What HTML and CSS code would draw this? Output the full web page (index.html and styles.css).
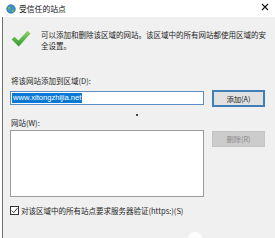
FILE: index.html
```html
<!DOCTYPE html>
<html lang="zh-CN">
<head>
<meta charset="utf-8">
<link rel="stylesheet" href="styles.css">
</head>
<body>
<div class="window">
  <div class="titlebar">
    <svg class="ticon" width="10" height="10" viewBox="0 0 10 10">
      <circle cx="5" cy="5" r="4.3" fill="#3d8fd1"/>
      <path d="M2 3 Q4 2 5 4 Q4 6 2.5 6 Z" fill="#6cbf4a"/>
      <path d="M6 6 Q8 5 8.5 7 Q7 8.5 5.5 8 Z" fill="#6cbf4a"/>
      <circle cx="5" cy="5" r="4.3" fill="none" stroke="#1f5f99" stroke-width="0.6"/>
    </svg>
    <span class="ttext">受信任的站点</span>
    <svg class="close" width="8" height="8" viewBox="0 0 8 8">
      <path d="M1 1 L7 7 M7 1 L1 7" stroke="#111" stroke-width="1.1" fill="none"/>
    </svg>
  </div>
  <div class="body">
    <div class="intro">
      <svg class="check" width="20" height="17" viewBox="0 0 20 17">
        <defs>
          <linearGradient id="g" x1="0" y1="0" x2="0" y2="1">
            <stop offset="0" stop-color="#8fd36a"/>
            <stop offset="1" stop-color="#2f9a2c"/>
          </linearGradient>
        </defs>
        <path d="M0.5 9.5 L3.5 6.8 L7.5 10.5 L16.5 0.8 L19.5 3.5 L7.8 16.5 Z" fill="url(#g)"/>
      </svg>
      <p class="desc">可以添加和删除该区域的网站。该区域中的所有网站都使用区域的安全设置。</p>
    </div>
    <div class="label first">将该网站添加到区域(D):</div>
    <div class="row">
      <div class="input"><span class="sel">www.xitongzhijia.net</span></div>
      <div class="btn primary">添加(A)</div>
    </div>
    <div class="label second">网站(W):</div>
    <div class="row">
      <div class="listbox"></div>
      <div class="btn disabled">删除(R)</div>
    </div>
    <div class="cbrow">
      <span class="cb">
        <svg width="9" height="9" viewBox="0 0 9 9">
          <path d="M1.8 4.6 L3.7 6.6 L7.4 2.2" fill="none" stroke="#222" stroke-width="0.9"/>
        </svg>
      </span>
      <span class="cbtext">对该区域中的所有站点要求服务器验证(https:)(S)</span>
    </div>
    <span class="dot"></span>
    <span class="blob"></span>
  </div>
</div>
</body>
</html>
```
FILE: styles.css
```css
* { box-sizing: border-box; }
html, body { margin: 0; padding: 0; }
body {
  width: 275px;
  height: 238px;
  overflow: hidden;
  background: #ffffff;
  font-family: "Noto Sans CJK SC", "Liberation Sans", sans-serif;
  font-size: 7.5px;
  color: #1e1e1e;
}
.window {
  position: relative;
  width: 275px;
  height: 238px;
  display: flex;
  flex-direction: column;
}
.titlebar {
  height: 17px;
  background: #ffffff;
  display: flex;
  align-items: center;
  padding-left: 6px;
  flex: none;
}
.ticon { flex: none; }
.ttext {
  margin-left: 3px;
  font-size: 7.8px;
  color: #111;
}
.close {
  position: absolute;
  left: 261px;
  top: 3px;
  z-index: 5;
  display: block;
}
.body {
  position: relative;
  flex: 1;
  margin-left: 2px;
  border-left: 1px solid #6f6f6f;
  background: #f0f0f0;
  padding: 12px 10px 0 7px;
}
.intro {
  display: flex;
  align-items: flex-start;
  padding-left: 1px;
}
.check { flex: none; margin-top: 1px; }
.desc {
  margin: 0 0 0 10px;
  line-height: 11px;
  width: 230px;
  flex: none;
}
.label {
  line-height: 11px;
  padding-left: 1px;
}
.label.first { margin-top: 24px; }
.label.second { margin-top: 10px; }
.row {
  display: flex;
  align-items: flex-start;
  gap: 8px;
  margin-top: 4px;
}
.label.second + .row { margin-top: 2px; }
.input {
  width: 194px;
  height: 14px;
  margin-top: 1px;
  background: #fff;
  border: 1px solid #5b8ec4;
  padding: 1px 1px;
  display: flex;
  align-items: center;
}
.sel {
  background: #0a78d4;
  color: #fff;
  font-family: "Liberation Sans", "DejaVu Sans", sans-serif;
  font-size: 7.6px;
  line-height: 10px;
  padding: 0 1px;
}
.btn {
  width: 53px;
  display: flex;
  align-items: center;
  justify-content: center;
  font-size: 7.3px;
}
.btn.primary {
  height: 17px;
  background: #e1e1e1;
  border: 2px solid #3f7fb4;
  color: #222;
}
.btn.disabled {
  height: 16px;
  margin-top: 1px;
  background: #cccccc;
  border: 1px solid #c4c4c4;
  color: #8a8a8a;
}
.listbox {
  width: 194px;
  height: 67px;
  background: #fff;
  border: 1px solid #9a9a9a;
}
.cbrow {
  display: flex;
  align-items: center;
  margin-top: 8px;
  line-height: 11px;
}
.cb {
  width: 9px;
  height: 9px;
  border: 1px solid #333;
  background: #fff;
  display: flex;
  align-items: center;
  justify-content: center;
  flex: none;
}
.cb svg { display: block; flex: none; }
.cbtext { margin-left: 2px; }
.dot {
  position: absolute;
  left: 133px;
  top: 97px;
  width: 2px;
  height: 2px;
  border-radius: 50%;
  background: #111;
}
.blob {
  position: absolute;
  left: 185px;
  top: 215px;
  width: 14px;
  height: 8px;
  border-radius: 6px 6px 0 0;
  background: #ffffff;
  opacity: 0.8;
}
```
